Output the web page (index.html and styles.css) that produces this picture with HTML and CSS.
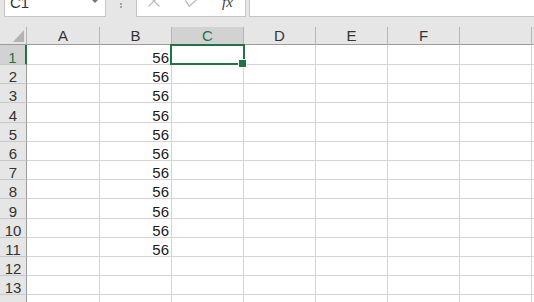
FILE: index.html
```html
<!DOCTYPE html>
<html lang="en">

<head>
	<meta charset="UTF-8" />
	<meta name="viewport" content="width=device-width, initial-scale=1.0" />
	<title>Sheet1</title>
	<link rel="stylesheet" href="styles.css">
</head>

<body>
	<div class="formula-bar">
		<div class="name-box">C1</div>
		<span class="grip"></span>
		<div class="fx-box">
			<svg class="ico" width="12" height="14" viewBox="0 0 12 14">
				<path d="M0.5 1.5 L11.5 12.5 M11.5 1.5 L0.5 12.5" stroke="#bdbdbd" stroke-width="1.3" fill="none" />
			</svg>
			<svg class="ico ok" width="14" height="14" viewBox="0 0 14 14">
				<path d="M0.5 6.5 L4.2 12.3 L13.5 4" stroke="#bdbdbd" stroke-width="1.4" fill="none" />
			</svg>
			<span class="fx">fx</span>
		</div>
		<div class="formula-input"></div>
	</div>

	<div class="sheet">
		<div class="row head">
			<div class="hc corner">
				<svg width="11" height="12" viewBox="0 0 11 12"><polygon points="11,0 11,12 0,12" fill="#b4b4b4" /></svg>
			</div>
			<div class="hc">A</div><div class="hc">B</div><div class="hc on">C</div><div class="hc">D</div>
			<div class="hc">E</div><div class="hc">F</div><div class="hc"></div><div class="hc"></div>
		</div>
		<div class="row first"><div class="rh on">1</div><div class="c"></div><div class="c">56</div><div class="c"></div><div class="c"></div><div class="c"></div><div class="c"></div><div class="c"></div><div class="c"></div></div>
		<div class="row"><div class="rh">2</div><div class="c"></div><div class="c">56</div><div class="c"></div><div class="c"></div><div class="c"></div><div class="c"></div><div class="c"></div><div class="c"></div></div>
		<div class="row"><div class="rh">3</div><div class="c"></div><div class="c">56</div><div class="c"></div><div class="c"></div><div class="c"></div><div class="c"></div><div class="c"></div><div class="c"></div></div>
		<div class="row"><div class="rh">4</div><div class="c"></div><div class="c">56</div><div class="c"></div><div class="c"></div><div class="c"></div><div class="c"></div><div class="c"></div><div class="c"></div></div>
		<div class="row"><div class="rh">5</div><div class="c"></div><div class="c">56</div><div class="c"></div><div class="c"></div><div class="c"></div><div class="c"></div><div class="c"></div><div class="c"></div></div>
		<div class="row"><div class="rh">6</div><div class="c"></div><div class="c">56</div><div class="c"></div><div class="c"></div><div class="c"></div><div class="c"></div><div class="c"></div><div class="c"></div></div>
		<div class="row"><div class="rh">7</div><div class="c"></div><div class="c">56</div><div class="c"></div><div class="c"></div><div class="c"></div><div class="c"></div><div class="c"></div><div class="c"></div></div>
		<div class="row"><div class="rh">8</div><div class="c"></div><div class="c">56</div><div class="c"></div><div class="c"></div><div class="c"></div><div class="c"></div><div class="c"></div><div class="c"></div></div>
		<div class="row"><div class="rh">9</div><div class="c"></div><div class="c">56</div><div class="c"></div><div class="c"></div><div class="c"></div><div class="c"></div><div class="c"></div><div class="c"></div></div>
		<div class="row"><div class="rh">10</div><div class="c"></div><div class="c">56</div><div class="c"></div><div class="c"></div><div class="c"></div><div class="c"></div><div class="c"></div><div class="c"></div></div>
		<div class="row"><div class="rh">11</div><div class="c"></div><div class="c">56</div><div class="c"></div><div class="c"></div><div class="c"></div><div class="c"></div><div class="c"></div><div class="c"></div></div>
		<div class="row"><div class="rh">12</div><div class="c"></div><div class="c"></div><div class="c"></div><div class="c"></div><div class="c"></div><div class="c"></div><div class="c"></div><div class="c"></div></div>
		<div class="row"><div class="rh">13</div><div class="c"></div><div class="c"></div><div class="c"></div><div class="c"></div><div class="c"></div><div class="c"></div><div class="c"></div><div class="c"></div></div>
		<div class="row"><div class="rh">14</div><div class="c"></div><div class="c"></div><div class="c"></div><div class="c"></div><div class="c"></div><div class="c"></div><div class="c"></div><div class="c"></div></div>

		<div class="sel"></div>
	</div>
</body>

</html>
```

FILE: styles.css
```css
* {
	margin: 0;
	padding: 0;
	box-sizing: border-box;
}

body {
	width: 534px;
	height: 302px;
	overflow: hidden;
	background-color: #e6e6e6;
	font-family: "Liberation Sans", Arial, sans-serif;
	font-size: 15px;
	color: #1a1a1a;
}

/* formula bar, top is cut off */
.formula-bar {
	display: flex;
	align-items: flex-start;
	height: 17px;
}

.name-box {
	position: relative;
	width: 102px;
	height: 24px;
	margin: -7px 0 0 4px;
	padding-left: 5px;
	border: 1px solid #c6c6c6;
	background-color: #fff;
	line-height: 17px;
	color: #333;
}

.name-box::after {
	content: "";
	position: absolute;
	right: 6px;
	top: 5px;
	border-left: 4px solid transparent;
	border-right: 4px solid transparent;
	border-top: 4px solid #777;
}

.grip {
	width: 2px;
	height: 2px;
	margin: 3px 14px 0;
	background-color: #a6a6a6;
	box-shadow: 0 3px 0 #a6a6a6;
}

.fx-box {
	display: flex;
	align-items: flex-start;
	width: 110px;
	height: 24px;
	margin-top: -7px;
	padding-left: 11px;
	border: 1px solid #c6c6c6;
	background-color: #fff;
}

.ico {
	display: block;
}

.ok {
	margin-left: 25px;
}

.fx {
	margin: 1px 0 0 23px;
	font-family: "Liberation Serif", "Times New Roman", serif;
	font-style: italic;
	font-size: 15px;
	line-height: 14px;
	color: #444;
}

.formula-input {
	flex: 1;
	height: 24px;
	margin: -7px 0 0 3px;
	border: 1px solid #c6c6c6;
	border-right: none;
	background-color: #fff;
}

/* grid */
.sheet {
	position: relative;
	padding-top: 10px;
}

.row {
	display: grid;
	grid-template-columns: 27px 73px repeat(7, 72px);
	height: 19.2px;
}

.row.head {
	height: 18px;
}

.row.first {
	height: 20px;
}

.c {
	display: flex;
	align-items: flex-end;
	justify-content: flex-end;
	padding-right: 2px;
	background-color: #fff;
	border-right: 1px solid #d4d4d4;
	border-bottom: 1px solid #d4d4d4;
	line-height: 13px;
}

.rh {
	display: flex;
	align-items: flex-end;
	justify-content: center;
	background-color: #e6e6e6;
	border-right: 1px solid #9b9b9b;
	border-bottom: 1px solid #c8c8c8;
	line-height: 13px;
	color: #333;
}

.rh.on {
	background-color: #d2d2d2;
	border-right: 2px solid #217346;
	color: #217346;
}

.hc {
	display: flex;
	align-items: center;
	justify-content: center;
	background-color: #e6e6e6;
	border-right: 1px solid #b5b5b5;
	border-bottom: 1px solid #9b9b9b;
	line-height: 17px;
	color: #333;
}

.hc.on {
	background-color: #d2d2d2;
	border-bottom-color: #217346;
	color: #217346;
}

.corner {
	align-items: flex-end;
	justify-content: flex-end;
	padding: 0 2px 2px 0;
}

.corner svg {
	display: block;
}

.sel {
	position: absolute;
	left: 170px;
	top: 27px;
	width: 75px;
	height: 21px;
	border: 2px solid #217346;
}

.sel::after {
	content: "";
	position: absolute;
	right: -4px;
	bottom: -5px;
	width: 7px;
	height: 7px;
	background-color: #217346;
	border: 1px solid #fff;
}
```
